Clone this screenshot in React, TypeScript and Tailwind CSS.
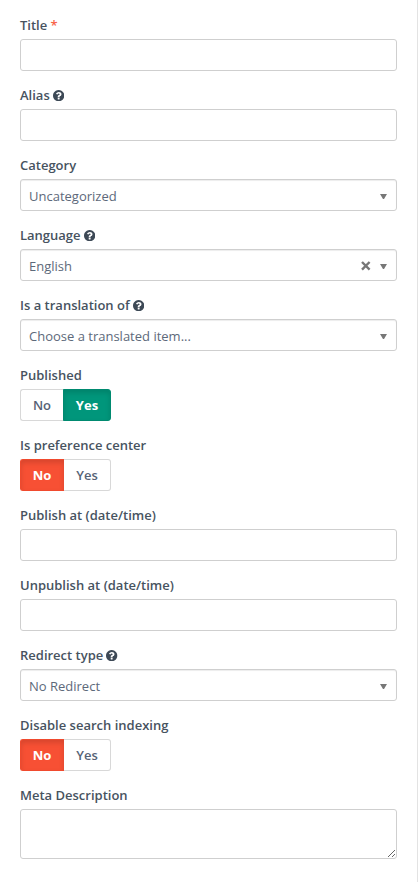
import type { ReactNode } from 'react';

type FieldProps = { label: string; help?: boolean; required?: boolean; children: ReactNode };

function HelpIcon() {
  return (
    <svg className="mt-px ml-[3px] size-[11.300px] text-[#3d4956]" viewBox="0 0 1536 1536" fill="currentColor">
      <path d="M896 1248v-192q0-14-9-23t-23-9H672q-14 0-23 9t-9 23v192q0 14 9 23t23 9h192q14 0 23-9t9-23zm256-672q0-88-55.500-163T958 297t-170-41q-243 0-371 213-15 24 8 42l132 100q7 6 19 6 16 0 25-12 53-68 86-92 34-24 86-24 48 0 85.500 26t37.500 59q0 38-20 61t-68 45q-63 28-115.500 86.500T640 892v36q0 14 9 23t23 9h192q14 0 23-9t9-23q0-19 21.500-49.500T972 829q32-18 49-28.500t46-35 44.500-48 28-60.500 12.500-81zm384 192q0 209-103 385.500T1153.500 1433 768 1536t-385.500-103T103 1153.500 0 768t103-385.500T382.500 103 768 0t385.500 103T1433 382.500 1536 768z" />
    </svg>
  );
}

function Field({ label, help, required, children }: FieldProps) {
  return (
    <div className="flex flex-col gap-1">
      <div className="flex h-5 items-center text-[13px] leading-5 font-semibold whitespace-pre text-[#47535f]">
        <span>{label}</span>
        {required && <span className="font-semibold text-[#f8654a]"> *</span>}
        {help && <HelpIcon />}
      </div>
      {children}
    </div>
  );
}

function TextInput({ label }: { label: string }) {
  return <input aria-label={label} className="h-8 w-full rounded-[3px] border border-[#cfcfcf] bg-white px-2 text-[13px] outline-none" />;
}

function Select({ value, clearable }: { value: string; clearable?: boolean }) {
  return (
    <div className="flex h-8 w-full items-center rounded-[3px] border border-[#cfcfcf] bg-white pr-[9px] pl-2 text-[13px] text-[#5d697a] shadow-[inset_0_1px_1px_rgba(0,0,0,0.075)]">
      <span className="flex-1 pt-0.5 leading-5">{value}</span>
      {clearable && (
        <svg className="mt-px mr-[9px] size-[10px]" viewBox="0 0 10 10" stroke="#777" strokeWidth="2.4" fill="none">
          <path d="M1 1 8.600 8.600M8.600 1 1 8.600" />
        </svg>
      )}
      <svg className="mt-[3px] h-[5px] w-[7px]" viewBox="0 0 7 5" fill="#777">
        <path d="M0 0H7L4 5H3Z" />
      </svg>
    </div>
  );
}

function Toggle({ value }: { value: 'yes' | 'no' }) {
  const plain = 'bg-white font-semibold text-[#566275] border-[#d8d8d8]';
  return (
    <div className="flex h-8 text-[13px]">
      <button
        type="button"
        className={`w-11 rounded-l-[3px] border border-r-0 pt-px pr-px ${
          value === 'no' ? 'border-[#f04a2e] bg-[#f75034] font-bold text-white shadow-[inset_0_3px_5px_rgba(0,0,0,0.125)]' : plain
        }`}
      >
        No
      </button>
      <button
        type="button"
        className={`rounded-r-[3px] border pt-px ${
          value === 'yes'
            ? '-ml-px w-12 border-[#008a70] bg-[#00967b] font-bold text-white shadow-[inset_0_3px_5px_rgba(0,0,0,0.125)]'
            : `w-[47px] border-l-0 ${plain}`
        }`}
      >
        Yes
      </button>
    </div>
  );
}

export default function App() {
  return (
    <div className="h-[882px] w-[418px] overflow-hidden border-r border-[#e3e3e3] bg-white px-5 pt-[15px] font-['Open_Sans','Noto_Sans',sans-serif]">
      <form className="flex w-[377px] flex-col gap-[14px]">
        <Field label="Title" required><TextInput label="Title" /></Field>
        <Field label="Alias" help><TextInput label="Alias" /></Field>
        <Field label="Category"><Select value="Uncategorized" /></Field>
        <Field label="Language" help><Select value="English" clearable /></Field>
        <Field label="Is a translation of" help><Select value="Choose a translated item..." /></Field>
        <Field label="Published"><Toggle value="yes" /></Field>
        <Field label="Is preference center"><Toggle value="no" /></Field>
        <Field label="Publish at (date/time)"><TextInput label="Publish at (date/time)" /></Field>
        <Field label="Unpublish at (date/time)"><TextInput label="Unpublish at (date/time)" /></Field>
        <Field label="Redirect type" help><Select value="No Redirect" /></Field>
        <Field label="Disable search indexing"><Toggle value="no" /></Field>
        <Field label="Meta Description">
          <textarea aria-label="Meta Description" className="block h-[50px] w-full rounded-[3px] border border-[#cfcfcf] bg-white outline-none" />
        </Field>
      </form>
    </div>
  );
}
